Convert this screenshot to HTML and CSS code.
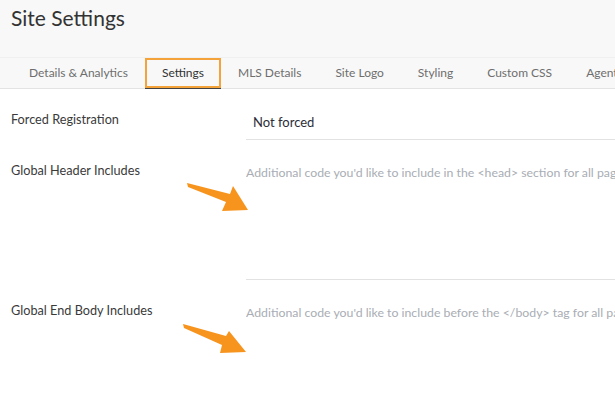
FILE: index.html
```html
<!DOCTYPE html>
<html lang="en">
<head>
<meta charset="utf-8">
<title>Site Settings</title>
<link rel="stylesheet" href="styles.css">
</head>
<body>
<div class="page">
  <header class="top">
    <h1 class="title">Site Settings</h1>
    <nav class="tabs">
      <a class="tab">Details &amp; Analytics</a>
      <a class="tab tab-active">Settings</a>
      <a class="tab">MLS Details</a>
      <a class="tab">Site Logo</a>
      <a class="tab">Styling</a>
      <a class="tab">Custom CSS</a>
      <a class="tab">Agents</a>
    </nav>
  </header>
  <main class="form">
    <div class="row row-select">
      <label class="label">Forced Registration</label>
      <div class="field select">Not forced</div>
    </div>
    <div class="row">
      <label class="label">Global Header Includes</label>
      <div class="field area"><span class="placeholder">Additional code you'd like to include in the &lt;head&gt; section for all pages of your site</span></div>
    </div>
    <div class="row">
      <label class="label">Global End Body Includes</label>
      <div class="field area"><span class="placeholder">Additional code you'd like to include before the &lt;/body&gt; tag for all pages of your site</span></div>
    </div>
  </main>
  <svg class="annot" width="615" height="393" viewBox="0 0 615 393">
    <polygon class="arrow" points="187,183 230,194 233,186 248,210 222,211 226,202 188,187"/>
    <polygon class="arrow" points="183,324 226,336 229,331 246,352 220,353 222,345 184,328"/>
  </svg>
</div>
</body>
</html>
```

FILE: styles.css
```css
html, body {
  margin: 0;
  padding: 0;
  background: #ffffff;
  overflow: hidden;
}

.page {
  position: relative;
  width: 615px;
  height: 393px;
  overflow: hidden;
  font-family: "Lato", "Noto Sans", sans-serif;
}

.top {
  background: #f8f8f8;
}

.title {
  margin: 0;
  padding: 6px 0 0 11px;
  height: 51px;
  font-size: 21px;
  line-height: 24px;
  font-weight: 400;
  color: #333333;
}

.tabs {
  display: flex;
  padding-left: 12px;
  height: 30px;
  border-top: 1px solid #f0f0f0;
  border-bottom: 1px solid #e3e3e3;
  white-space: nowrap;
}

.tab {
  position: relative;
  padding: 0 17px;
  line-height: 30px;
  font-size: 12px;
  color: #6e6e6e;
}

.tab-active {
  color: #333333;
}

.tab-active::before {
  content: "";
  position: absolute;
  left: 0;
  right: 0;
  bottom: -1px;
  height: 2px;
  background: #444444;
}

.tab-active::after {
  content: "";
  position: absolute;
  left: 0;
  right: 0;
  top: 0;
  bottom: 0;
  border: 2px solid #f4a23a;
}

.form {
  padding-top: 16px;
}

.row {
  display: grid;
  grid-template-columns: 235px 600px;
  padding-left: 11px;
  margin-bottom: 15px;
}

.label {
  padding-top: 7px;
  font-size: 12.7px;
  line-height: 16px;
  color: #3a3a3a;
}

.row-select .label {
  padding-top: 6px;
}

.field {
  border-bottom: 1px solid #e2e2e2;
  white-space: nowrap;
  overflow: hidden;
}

.select {
  padding: 9px 7px 9px;
  font-size: 13px;
  line-height: 16px;
  color: #2b2d38;
}

.area {
  box-sizing: border-box;
  height: 125px;
  padding-top: 10px;
  font-size: 12.3px;
  line-height: 16px;
}

.placeholder {
  color: #a9adb4;
}

.annot {
  position: absolute;
  left: 0;
  top: 0;
  pointer-events: none;
}

.arrow {
  fill: #f7941e;
}
```
